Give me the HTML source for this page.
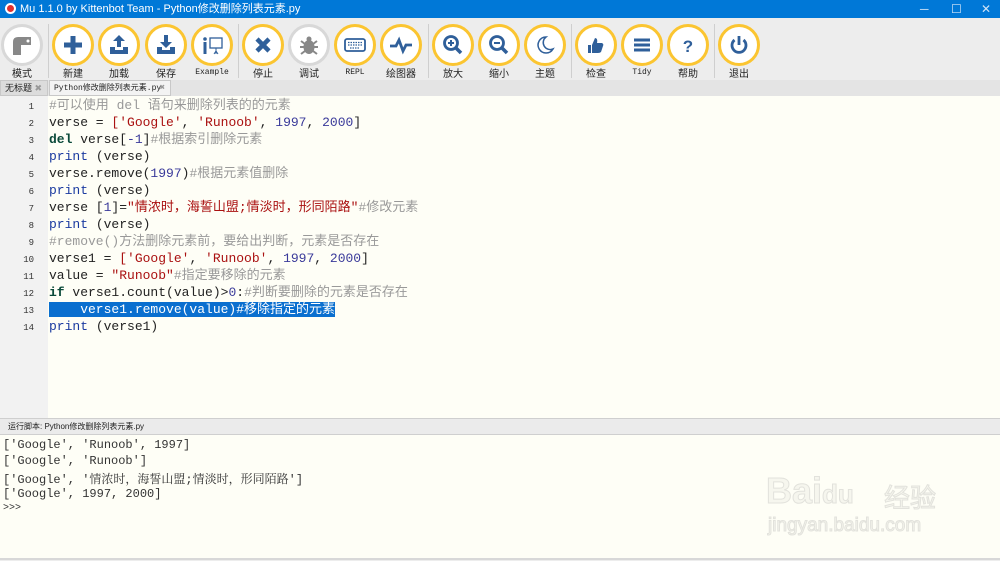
<!DOCTYPE html>
<html><head><meta charset="utf-8"><style>
*{margin:0;padding:0;box-sizing:border-box}
body{width:1000px;height:561px;overflow:hidden;background:#ededed;font-family:"Liberation Sans","Noto Sans CJK SC",sans-serif;position:relative}
.title{position:absolute;left:0;top:0;width:1000px;height:18px;background:#0078d7;color:#fff;font-size:11px;line-height:18px;padding-left:20px}
.title .logo{position:absolute;left:5px;top:3px;width:11px;height:11px;border-radius:50%;background:#e03030;border:2px solid #fff}
.wc{position:absolute;top:0;color:#cfe3f7;font-size:12px;line-height:18px}
.btn{position:absolute;top:24px;width:42px;height:42px;border-radius:50%;background:#fff;border:3px solid #fbc531}
.btn.g{border-color:#d8d8d8}
.btn svg{position:absolute;left:0;top:0;width:36px;height:36px}
.lbl{position:absolute;top:65px;width:60px;text-align:center;font-size:10px;color:#222}
.lbl.m{font-family:"Liberation Mono",monospace;font-size:8px;top:68px}
.sep{position:absolute;top:24px;width:1px;height:54px;background:#cfcfcf}
.tabs{position:absolute;top:80px;left:0;width:1000px;height:16px;background:#e4e4e4}
.tab{position:absolute;top:0;height:16px;font-size:9px;line-height:15px;background:#dcdcdc;border:1px solid #c8c8c8;padding-left:4px;color:#222;white-space:nowrap}
.tab.a{background:#f3f3f3}
.tab span{position:absolute;right:5px;top:0;color:#999}
.gut{position:absolute;left:0;top:96px;width:48px;height:322px;background:#f2f2f2}
.ed{position:absolute;left:48px;top:96px;width:952px;height:322px;background:#fefef6}
.ln{position:absolute;left:0;width:34px;text-align:right;font-family:"Liberation Mono",monospace;font-size:9px;color:#333}
.code{position:absolute;left:49px;font-family:"Liberation Mono","Noto Sans CJK SC",monospace;font-size:13px;color:#222;white-space:pre;line-height:17px}
.c{color:#999}.s{color:#a11}.n{color:#3a3a9a}.k{color:#1a3aa0}.b{color:#0b4a3a;font-weight:bold}
.sel{background:#0a6fcf;color:#fff}
.ph{position:absolute;left:0;top:418px;width:1000px;height:17px;background:#ebebeb;border-top:1px solid #cfcfcf;border-bottom:1px solid #cfcfcf;font-size:8px;line-height:16px;padding-left:8px;color:#222}
.out{position:absolute;left:0;top:435px;width:1000px;height:125px;background:#fefef6;border-bottom:2px solid #d8d8d8}
.o{position:absolute;left:3px;font-family:"Liberation Mono","Noto Serif CJK SC",monospace;font-size:12px;color:#333;white-space:pre}
.wm{position:absolute;color:#f6f6ee;-webkit-text-stroke:1px #e2e2dc;font-family:"Liberation Sans",sans-serif}
</style></head><body>
<div class="title"><div class="logo"></div>Mu 1.1.0 by Kittenbot Team - Python修改删除列表元素.py</div>
<div class="wc" style="left:920px">─</div><div class="wc" style="left:951px">☐</div><div class="wc" style="left:981px">✕</div>

<div class="btn g" style="left:1px"><svg viewBox="0 0 36 36"><path d="M9 28V15q0-5 5-5h13v8H17v10z" fill="#888"/><circle cx="24" cy="14" r="1.5" fill="#fff"/></svg></div>
<div class="lbl" style="left:-8px">模式</div>
<div class="sep" style="left:48px"></div>
<div class="btn" style="left:52px"><svg viewBox="0 0 36 36"><path d="M15.5 9h5v6.5H27v5h-6.5V27h-5v-6.5H9v-5h6.5z" fill="#2f5f9a"/></svg></div><div class="lbl" style="left:43px">新建</div>
<div class="btn" style="left:98px"><svg viewBox="0 0 36 36"><path d="M18 8l6 6h-4v6h-4v-6h-4zM9 20h5v3h8v-3h5v7H9z" fill="#2f5f9a"/></svg></div><div class="lbl" style="left:89px">加载</div>
<div class="btn" style="left:145px"><svg viewBox="0 0 36 36"><path d="M16 8h4v7h4l-6 6-6-6h4zM9 20h5v3h8v-3h5v7H9z" fill="#2f5f9a"/></svg></div><div class="lbl" style="left:136px">保存</div>
<div class="btn" style="left:191px"><svg viewBox="0 0 36 36"><rect x="16" y="11" width="12" height="10" fill="none" stroke="#2f5f9a" stroke-width="1.3"/><circle cx="11" cy="12" r="1.8" fill="#2f5f9a"/><path d="M9.5 15h3v12h-3z" fill="#2f5f9a"/><path d="M22 21v6M20 27l2-3 2 3" stroke="#2f5f9a" fill="none"/></svg></div><div class="lbl m" style="left:182px">Example</div>
<div class="sep" style="left:238px"></div>
<div class="btn" style="left:242px"><svg viewBox="0 0 36 36"><path d="M12 12l12 12M24 12L12 24" stroke="#2f5f9a" stroke-width="4.5"/></svg></div><div class="lbl" style="left:233px">停止</div>
<div class="btn g" style="left:288px"><svg viewBox="0 0 36 36"><ellipse cx="18" cy="20" rx="5.5" ry="7" fill="#888"/><circle cx="18" cy="12" r="2.5" fill="#888"/><path d="M10 14l4 3M26 14l-4 3M9 20h4M27 20h-4M10 27l4-3M26 27l-4-3" stroke="#888" stroke-width="2"/></svg></div><div class="lbl" style="left:279px">调试</div>
<div class="btn" style="left:334px"><svg viewBox="0 0 36 36"><rect x="8" y="12" width="20" height="12" rx="2" fill="none" stroke="#2f5f9a" stroke-width="1.8"/><path d="M11 15.5h14M11 18h14M13 21h10" stroke="#2f5f9a" stroke-width="1.3" stroke-dasharray="1.5 1"/></svg></div><div class="lbl m" style="left:325px">REPL</div>
<div class="btn" style="left:380px"><svg viewBox="0 0 36 36"><path d="M7 19h6l3-6 4 11 3-6h6" fill="none" stroke="#2f5f9a" stroke-width="2.8"/></svg></div><div class="lbl" style="left:371px">绘图器</div>
<div class="sep" style="left:428px"></div>
<div class="btn" style="left:432px"><svg viewBox="0 0 36 36"><circle cx="16" cy="16" r="6.5" fill="none" stroke="#2f5f9a" stroke-width="2.8"/><path d="M21 21l5 5" stroke="#2f5f9a" stroke-width="3.5"/><path d="M13 16h6M16 13v6" stroke="#2f5f9a" stroke-width="2"/></svg></div><div class="lbl" style="left:423px">放大</div>
<div class="btn" style="left:478px"><svg viewBox="0 0 36 36"><circle cx="16" cy="16" r="6.5" fill="none" stroke="#2f5f9a" stroke-width="2.8"/><path d="M21 21l5 5" stroke="#2f5f9a" stroke-width="3.5"/><path d="M13 16h6" stroke="#2f5f9a" stroke-width="2"/></svg></div><div class="lbl" style="left:469px">缩小</div>
<div class="btn" style="left:524px"><svg viewBox="0 0 36 36"><path d="M19 10a8 8 0 1 0 7 12 7 7 0 0 1-7-12z" fill="none" stroke="#2f5f9a" stroke-width="1.5"/></svg></div><div class="lbl" style="left:515px">主题</div>
<div class="sep" style="left:571px"></div>
<div class="btn" style="left:575px"><svg viewBox="0 0 36 36"><path d="M10 18h3v8h-3zM14 18l3-7q3 0 2 5h5q2 1 1 3l-2 6q-1 1-3 1h-6z" fill="#2f5f9a"/></svg></div><div class="lbl" style="left:566px">检查</div>
<div class="btn" style="left:621px"><svg viewBox="0 0 36 36"><path d="M10 13h16M10 18h16M10 23h16" stroke="#2f5f9a" stroke-width="3"/></svg></div><div class="lbl m" style="left:612px">Tidy</div>
<div class="btn" style="left:667px"><svg viewBox="0 0 36 36"><text x="18" y="25" text-anchor="middle" font-family="Liberation Sans" font-weight="bold" font-size="17" fill="#2f5f9a">?</text></svg></div><div class="lbl" style="left:658px">帮助</div>
<div class="sep" style="left:714px"></div>
<div class="btn" style="left:718px"><svg viewBox="0 0 36 36"><path d="M13.5 13a7 7 0 1 0 9 0" fill="none" stroke="#2f5f9a" stroke-width="2.8"/><path d="M18 9v9" stroke="#2f5f9a" stroke-width="2.8"/></svg></div><div class="lbl" style="left:709px">退出</div>

<div class="tabs">
<div class="tab" style="left:0;width:48px">无标题<span>✖</span></div>
<div class="tab a" style="left:49px;width:122px;font-family:'Liberation Mono','Noto Sans CJK SC',monospace;font-size:8px;padding-left:4px">Python修改删除列表元素.py<span style="font-size:9px">✖</span></div>
</div>
<div class="gut"></div><div class="ed"></div>
<div class="ln" style="top:102px">1</div><div class="ln" style="top:119px">2</div><div class="ln" style="top:136px">3</div><div class="ln" style="top:153px">4</div><div class="ln" style="top:170px">5</div><div class="ln" style="top:187px">6</div><div class="ln" style="top:204px">7</div><div class="ln" style="top:221px">8</div><div class="ln" style="top:238px">9</div><div class="ln" style="top:255px">10</div><div class="ln" style="top:272px">11</div><div class="ln" style="top:289px">12</div><div class="ln" style="top:306px">13</div><div class="ln" style="top:323px">14</div>
<div class="code" style="top:97px"><span class="c">#可以使用 del 语句来删除列表的的元素</span>
verse = <span class="s">['Google'</span>, <span class="s">'Runoob'</span>, <span class="n">1997</span>, <span class="n">2000</span>]
<span class="b">del</span> verse[<span class="n">-1</span>]<span class="c">#根据索引删除元素</span>
<span class="k">print</span> (verse)
verse.remove(<span class="n">1997</span>)<span class="c">#根据元素值删除</span>
<span class="k">print</span> (verse)
verse [<span class="n">1</span>]=<span class="s">"情浓时，海誓山盟;情淡时，形同陌路"</span><span class="c">#修改元素</span>
<span class="k">print</span> (verse)
<span class="c">#remove()方法删除元素前，要给出判断，元素是否存在</span>
verse1 = <span class="s">['Google'</span>, <span class="s">'Runoob'</span>, <span class="n">1997</span>, <span class="n">2000</span>]
value = <span class="s">"Runoob"</span><span class="c">#指定要移除的元素</span>
<span class="b">if</span> verse1.count(value)&gt;<span class="n">0</span>:<span class="c">#判断要删除的元素是否存在</span>
<span class="sel">    verse1.remove(value)#移除指定的元素</span>
<span class="k">print</span> (verse1)</div>

<div class="ph">运行脚本: Python修改删除列表元素.py</div>
<div class="out"></div>
<div class="wm" style="left:766px;top:470px;font-size:36px;font-weight:bold">Bai<span style="font-size:26px">du</span></div>
<div class="wm" style="left:884px;top:478px;font-size:26px;font-family:'Noto Sans CJK SC',sans-serif">经验</div>
<div class="wm" style="left:768px;top:515px;font-size:19px">jingyan.baidu.com</div>
<div class="o" style="top:438px">['Google', 'Runoob', 1997]</div>
<div class="o" style="top:454px">['Google', 'Runoob']</div>
<div class="o" style="top:470px">['Google', '情浓时，海誓山盟;情淡时，形同陌路']</div>
<div class="o" style="top:487px">['Google', 1997, 2000]</div>
<div class="o" style="top:503px;font-size:10px">&gt;&gt;&gt;</div>
</body></html>
